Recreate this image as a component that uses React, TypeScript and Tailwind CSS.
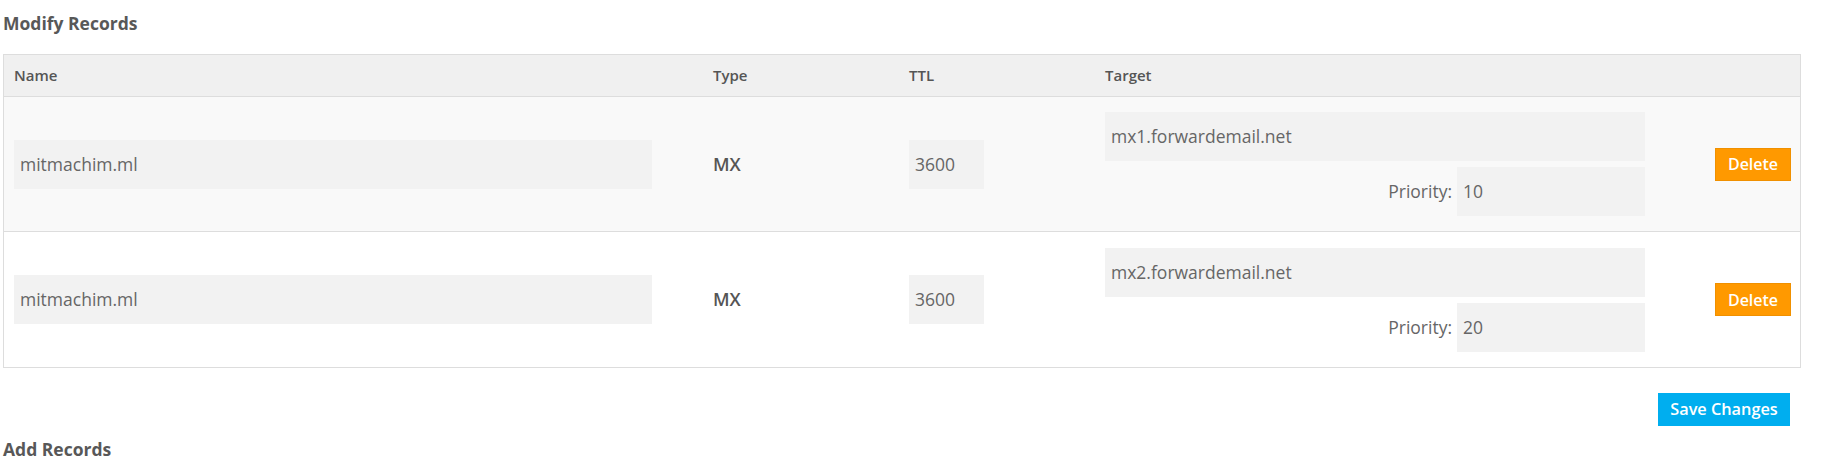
import React from "react";

const rows = [
  { name: "mitmachim.ml", type: "MX", ttl: "3600", target: "mx1.forwardemail.net", priority: "10", bg: "bg-[#f9f9f9]" },
  { name: "mitmachim.ml", type: "MX", ttl: "3600", target: "mx2.forwardemail.net", priority: "20", bg: "bg-white" },
];

const grid = "grid grid-cols-[699px_196px_196px_560px_1fr]";

export default function App() {
  return (
    <div className="w-[1832px] h-[462px] overflow-hidden bg-white pl-[3px] pt-[10px] text-[#555] [font-family:'Open_Sans',sans-serif]">
      <h2 className="text-[17.5px] leading-[27px] font-bold text-[#585858]">Modify Records</h2>

      <div className="mt-[17px] w-[1798px] border border-[#dddddd]">
        <div className={`${grid} h-[42px] items-center border-b border-[#dddddd] bg-[#f0f0f0] text-[15px] font-semibold text-[#555]`}>
          <div className="pl-[10px]">Name</div>
          <div className="pl-[10px]">Type</div>
          <div className="pl-[10px]">TTL</div>
          <div className="pl-[10px]">Target</div>
          <div />
        </div>

        {rows.map((r, i) => (
          <div
            key={i}
            className={`${grid} items-center ${r.bg} ${i === 0 ? "h-[135px] border-b border-[#dddddd]" : "h-[135px]"}`}
          >
            <div className="pl-[10px]">
              <div className="flex h-[49px] w-[638px] items-center bg-[#f2f2f2] pl-[6px] text-[17.5px] text-[#666]">
                {r.name}
              </div>
            </div>
            <div className="pl-[10px] text-[18px] font-semibold text-[#555]">{r.type}</div>
            <div className="pl-[10px]">
              <div className="flex h-[49px] w-[75px] items-center bg-[#f2f2f2] pl-[6px] text-[17.5px] text-[#666]">
                {r.ttl}
              </div>
            </div>
            <div className="flex flex-col gap-[6px] pl-[10px]">
              <div className="flex h-[49px] w-[540px] items-center bg-[#f2f2f2] pl-[6px] text-[17.5px] text-[#666]">
                {r.target}
              </div>
              <div className="flex w-[540px] items-center justify-end gap-[5px]">
                <span className="text-[17.5px] text-[#666]">Priority:</span>
                <div className="flex h-[49px] w-[188px] items-center bg-[#f2f2f2] pl-[6px] text-[17.5px] text-[#666]">
                  {r.priority}
                </div>
              </div>
            </div>
            <div className="flex justify-end pr-[9px]">
              <button className="flex h-[33px] w-[76px] items-center justify-center border border-[#f09000] bg-[#ff9900] text-[16px] font-semibold text-white">
                Delete
              </button>
            </div>
          </div>
        ))}
      </div>

      <div className="mt-[25px] flex w-[1798px] justify-end pr-[11px]">
        <button className="flex h-[33px] w-[132px] items-center justify-center bg-[#00aeef] text-[16.3px] font-semibold text-white">
          Save Changes
        </button>
      </div>

      <h2 className="mt-[10px] text-[17.5px] leading-[27px] font-bold text-[#585858]">Add Records</h2>
    </div>
  );
}
